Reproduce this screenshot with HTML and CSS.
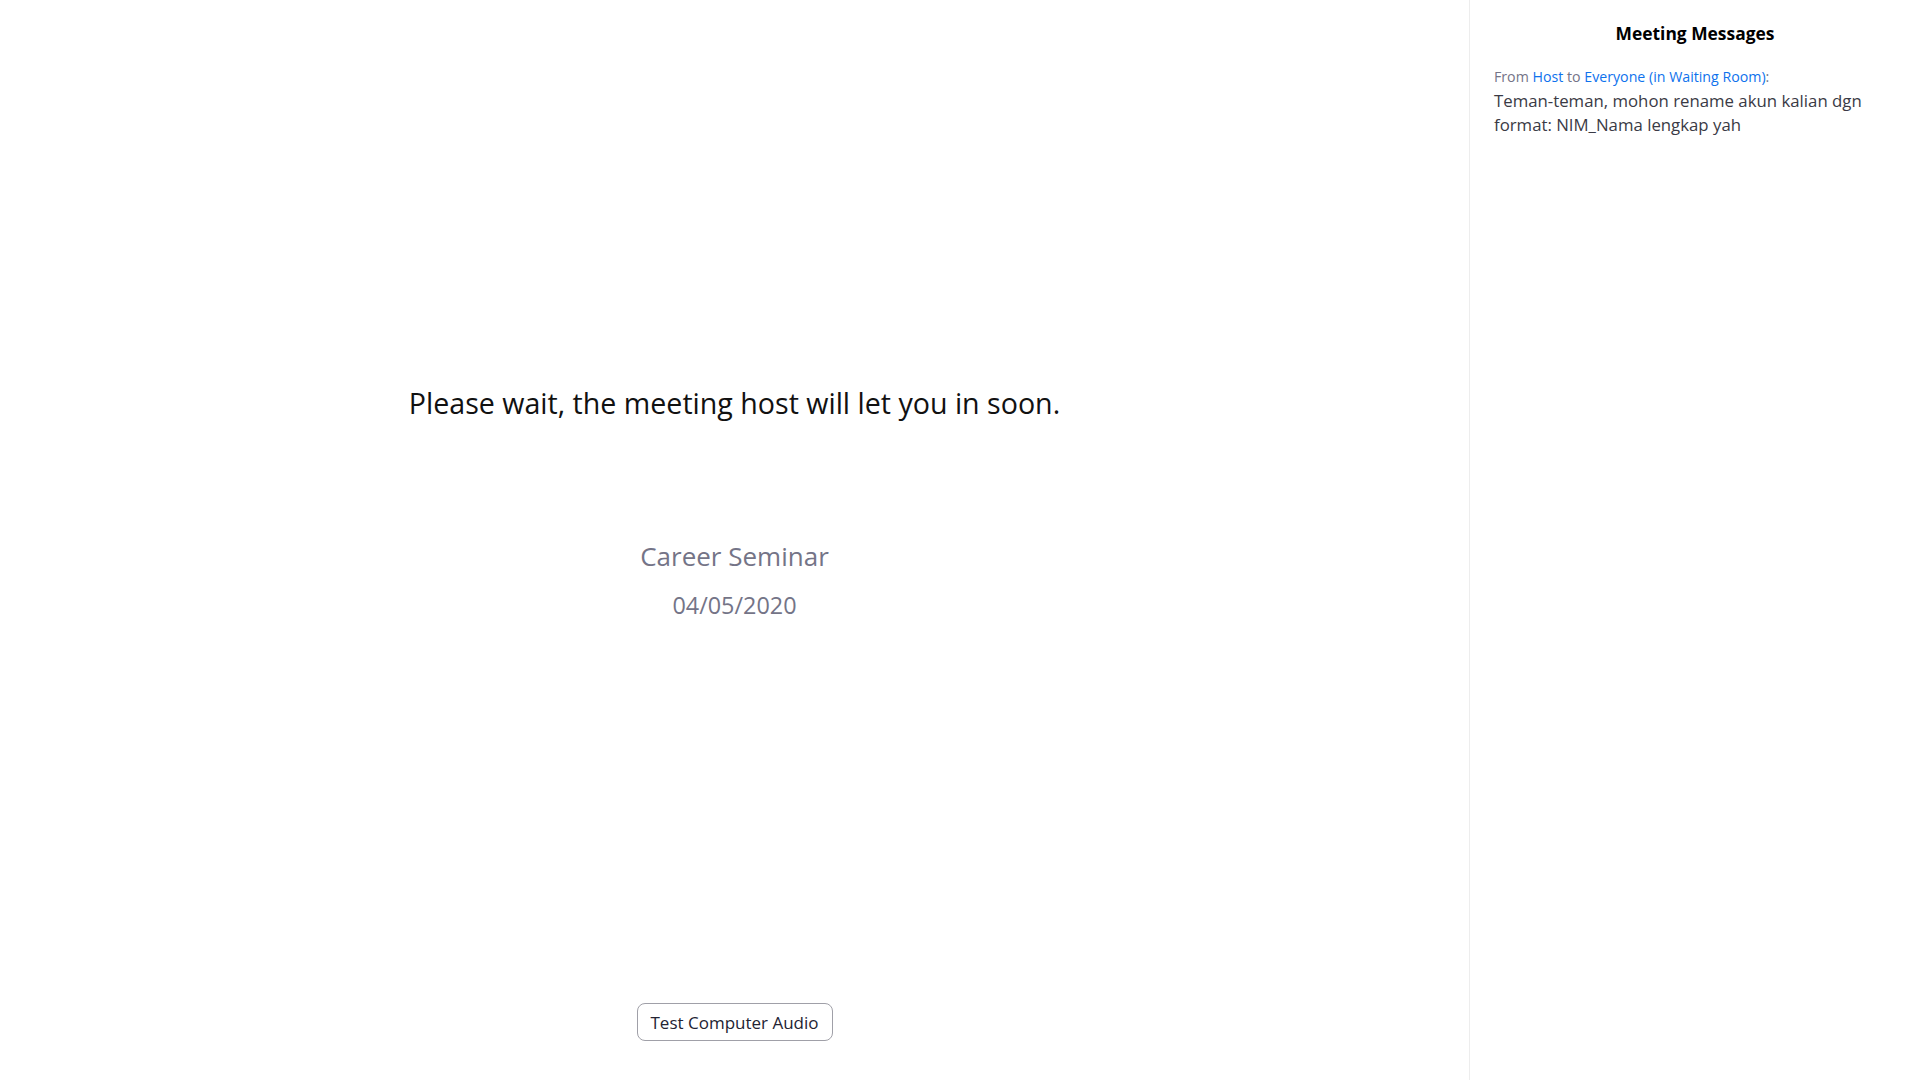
FILE: index.html
```html
<!DOCTYPE html>
<html lang="en">
<head>
<meta charset="utf-8">
<title>Waiting Room</title>
<link rel="stylesheet" href="styles.css">
</head>
<body>
<div class="app">
  <main class="waiting">
    <h1 class="wait-title">Please wait, the meeting host will let you in soon.</h1>
    <div class="meeting-info">
      <div class="meeting-name">Career Seminar</div>
      <div class="meeting-date">04/05/2020</div>
    </div>
    <div class="spacer"></div>
    <button class="audio-btn" type="button">Test Computer Audio</button>
  </main>
  <aside class="messages">
    <h2 class="messages-title">Meeting Messages</h2>
    <div class="message">
      <div class="message-meta">From <span class="link">Host</span> to <span class="link">Everyone (in Waiting Room)</span>:</div>
      <div class="message-text">Teman-teman, mohon rename akun kalian dgn format: NIM_Nama lengkap yah</div>
    </div>
  </aside>
</div>
</body>
</html>
```

FILE: styles.css
```css
* { box-sizing: border-box; }
html, body { margin: 0; padding: 0; height: 100%; background: #ffffff; }
body { font-family: "Open Sans", "Noto Sans", sans-serif; color: #232333; }
.app { display: flex; height: 100vh; }
.waiting {
  flex: 1;
  display: flex;
  flex-direction: column;
  align-items: center;
  padding: 383px 0 39px;
}
.wait-title {
  margin: 0;
  font-size: 28.6px;
  line-height: 40px;
  font-weight: 400;
  color: #111111;
}
.meeting-info {
  margin-top: 113px;
  display: flex;
  flex-direction: column;
  align-items: center;
  color: #747487;
}
.meeting-name { font-size: 26px; line-height: 40px; }
.meeting-date { font-size: 23.4px; line-height: 32px; margin-top: 13px; }
.spacer { flex: 1; }
.audio-btn {
  width: 196px;
  height: 38px;
  border: 1px solid #a0a0a8;
  border-radius: 8px;
  background: #ffffff;
  font-family: inherit;
  font-size: 17px;
  color: #232333;
  padding: 0;
}
.messages {
  width: 451px;
  border-left: 1px solid #ededed;
  padding: 19px 24px 0;
}
.messages-title {
  margin: 0;
  text-align: center;
  font-size: 17.4px;
  line-height: 28px;
  font-weight: 700;
  color: #000000;
}
.message { margin-top: 20px; }
.message-meta { font-size: 14.2px; line-height: 20px; color: #747487; }
.message-meta .link { color: #0e72ed; }
.message-text { font-size: 16.8px; line-height: 24px; color: #3a3a45; margin-top: 2px; }
```
